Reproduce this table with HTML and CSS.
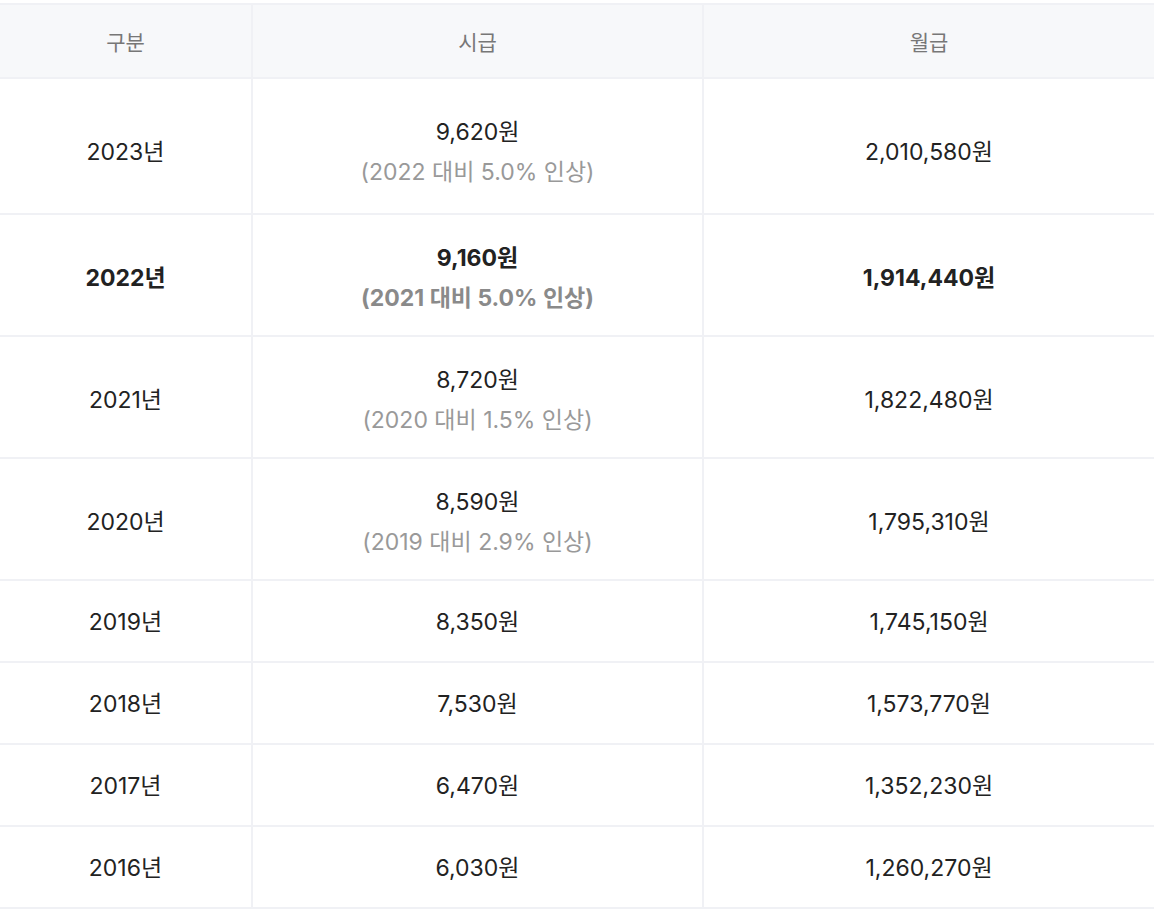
FILE: index.html
```html
<!DOCTYPE html>
<html lang="ko">
<head>
  <meta charset="UTF-8">
  <meta name="viewport" content="width=device-width, initial-scale=1.0">
  <title>최저임금</title>
  <link rel="stylesheet" href="styles.css">
</head>
<body>
  <div class="wrap">
    <table class="wage">
      <colgroup>
        <col class="c-year">
        <col class="c-hour">
        <col class="c-month">
      </colgroup>
      <thead>
        <tr>
          <th>구분</th>
          <th>시급</th>
          <th>월급</th>
        </tr>
      </thead>
      <tbody>
        <tr class="tall first">
          <td>2023년</td>
          <td>9,620원<span class="sub">(2022 대비 5.0% 인상)</span></td>
          <td>2,010,580원</td>
        </tr>
        <tr class="tall now">
          <td>2022년</td>
          <td>9,160원<span class="sub">(2021 대비 5.0% 인상)</span></td>
          <td>1,914,440원</td>
        </tr>
        <tr class="tall">
          <td>2021년</td>
          <td>8,720원<span class="sub">(2020 대비 1.5% 인상)</span></td>
          <td>1,822,480원</td>
        </tr>
        <tr class="tall">
          <td>2020년</td>
          <td>8,590원<span class="sub">(2019 대비 2.9% 인상)</span></td>
          <td>1,795,310원</td>
        </tr>
        <tr>
          <td>2019년</td>
          <td>8,350원</td>
          <td>1,745,150원</td>
        </tr>
        <tr>
          <td>2018년</td>
          <td>7,530원</td>
          <td>1,573,770원</td>
        </tr>
        <tr>
          <td>2017년</td>
          <td>6,470원</td>
          <td>1,352,230원</td>
        </tr>
        <tr>
          <td>2016년</td>
          <td>6,030원</td>
          <td>1,260,270원</td>
        </tr>
      </tbody>
    </table>
  </div>
</body>
</html>
```

FILE: styles.css
```css
html, body {
  margin: 0;
  padding: 0;
  background: #fff;
}
.wrap {
  padding-top: 3px;
  width: 1154px;
}
.wage {
  width: 1154px;
  table-layout: fixed;
  border-collapse: separate;
  border-spacing: 0;
  font-family: Inter, "Noto Sans CJK KR", sans-serif;
  font-size: 23px;
  color: #222;
  text-align: center;
}
.c-year { width: 253px; }
.c-hour { width: 451px; }
.c-month { width: 450px; }
.wage th,
.wage td {
  box-sizing: border-box;
  padding: 2px 0 0;
  border-bottom: 2px solid #f0f1f5;
  border-right: 2px solid #f0f1f5;
  vertical-align: middle;
  line-height: 32px;
}
.wage th:last-child,
.wage td:last-child {
  border-right: 0;
}
.wage thead tr {
  height: 76px;
}
.wage th {
  padding-top: 4px;
  border-top: 2px solid #f0f1f5;
  background: #f7f8fa;
  font-weight: 400;
  font-size: 21px;
  color: #777;
}
.wage tbody tr {
  height: 82px;
}
.wage tbody tr.tall {
  height: 122px;
}
.wage tbody tr.first {
  height: 136px;
}
.wage tr.tall td {
  padding-top: 6px;
}
.wage tr.first td {
  padding-top: 12px;
}
.sub {
  display: block;
  margin-top: 8px;
  color: #999;
}
.wage tr.now td {
  font-weight: 700;
}
.wage tr.now .sub {
  color: #8a8a8a;
}
```
